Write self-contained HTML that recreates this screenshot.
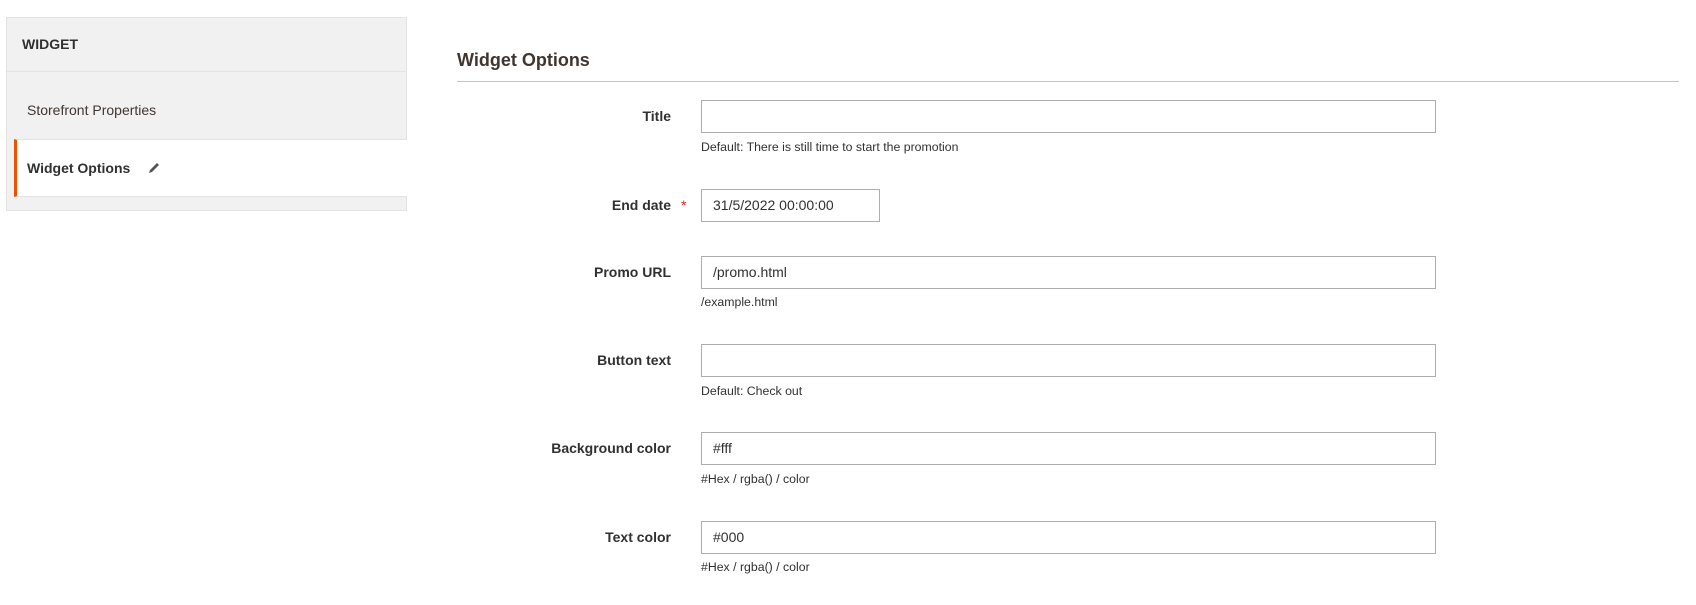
<!DOCTYPE html>
<html><head><meta charset="utf-8"><style>
*{box-sizing:border-box;margin:0;padding:0}
body{width:1696px;height:605px;background:#fff;font-family:"Liberation Sans",sans-serif;color:#303030;position:relative;overflow:hidden}
.a{position:absolute}
.side{left:6px;top:17px;width:401px;height:194px;background:#f1f1f1;border:1px solid #e3e3e3}
.lbl{position:absolute;right:1025px;font-size:14px;font-weight:bold;color:#303030;text-align:right;white-space:nowrap}
.inp{position:absolute;left:701px;width:735px;height:33px;border:1px solid #adadad;background:#fff;font-size:14px;padding:0 11px;line-height:31px;color:#303030}
.note{position:absolute;left:701px;font-size:12.3px;color:#303030;line-height:14px}
</style></head><body>
<div class="a side"></div>
<div class="a" style="left:7px;top:71px;width:399px;height:1px;background:#e3e3e3"></div>
<div class="a" style="left:22px;top:36px;font-size:14px;font-weight:bold;line-height:16px">WIDGET</div>
<div class="a" style="left:27px;top:101px;font-size:14px;line-height:18px;color:#41362f">Storefront Properties</div>
<div class="a" style="left:14px;top:139px;width:393px;height:58px;background:#fff;border-left:3px solid #eb5202;border-top:1px solid #e3e3e3;border-bottom:1px solid #e3e3e3"></div>
<div class="a" style="left:27px;top:159px;font-size:14px;line-height:18px;color:#303030;font-weight:bold">Widget Options</div>
<svg class="a" style="left:146px;top:160px" width="16" height="16" viewBox="0 0 16 16"><path d="M3 13 L4 10 L11 3 L13 5 L6 12 Z" fill="#555"/><path d="M11.5 2.5 L13.5 4.5" stroke="#fff" stroke-width="1"/></svg>
<div class="a" style="left:457px;top:49px;font-size:18px;font-weight:bold;line-height:22px;color:#41362f">Widget Options</div>
<div class="a" style="left:457px;top:81px;width:1222px;height:1px;background:#cac3b4"></div>

<div class="lbl" style="top:108px">Title</div>
<div class="inp" style="top:100px"></div>
<div class="note" style="top:140px">Default: There is still time to start the promotion</div>

<div class="lbl" style="top:197px">End date</div>
<div class="a" style="left:681px;top:197px;color:#e22626;font-size:14px">*</div>
<div class="inp" style="top:189px;width:179px">31/5/2022 00:00:00</div>

<div class="lbl" style="top:264px">Promo URL</div>
<div class="inp" style="top:256px">/promo.html</div>
<div class="note" style="top:295px">/example.html</div>

<div class="lbl" style="top:352px">Button text</div>
<div class="inp" style="top:344px"></div>
<div class="note" style="top:384px">Default: Check out</div>

<div class="lbl" style="top:440px">Background color</div>
<div class="inp" style="top:432px">#fff</div>
<div class="note" style="top:472px">#Hex / rgba() / color</div>

<div class="lbl" style="top:529px">Text color</div>
<div class="inp" style="top:521px">#000</div>
<div class="note" style="top:560px">#Hex / rgba() / color</div>
</body></html>
